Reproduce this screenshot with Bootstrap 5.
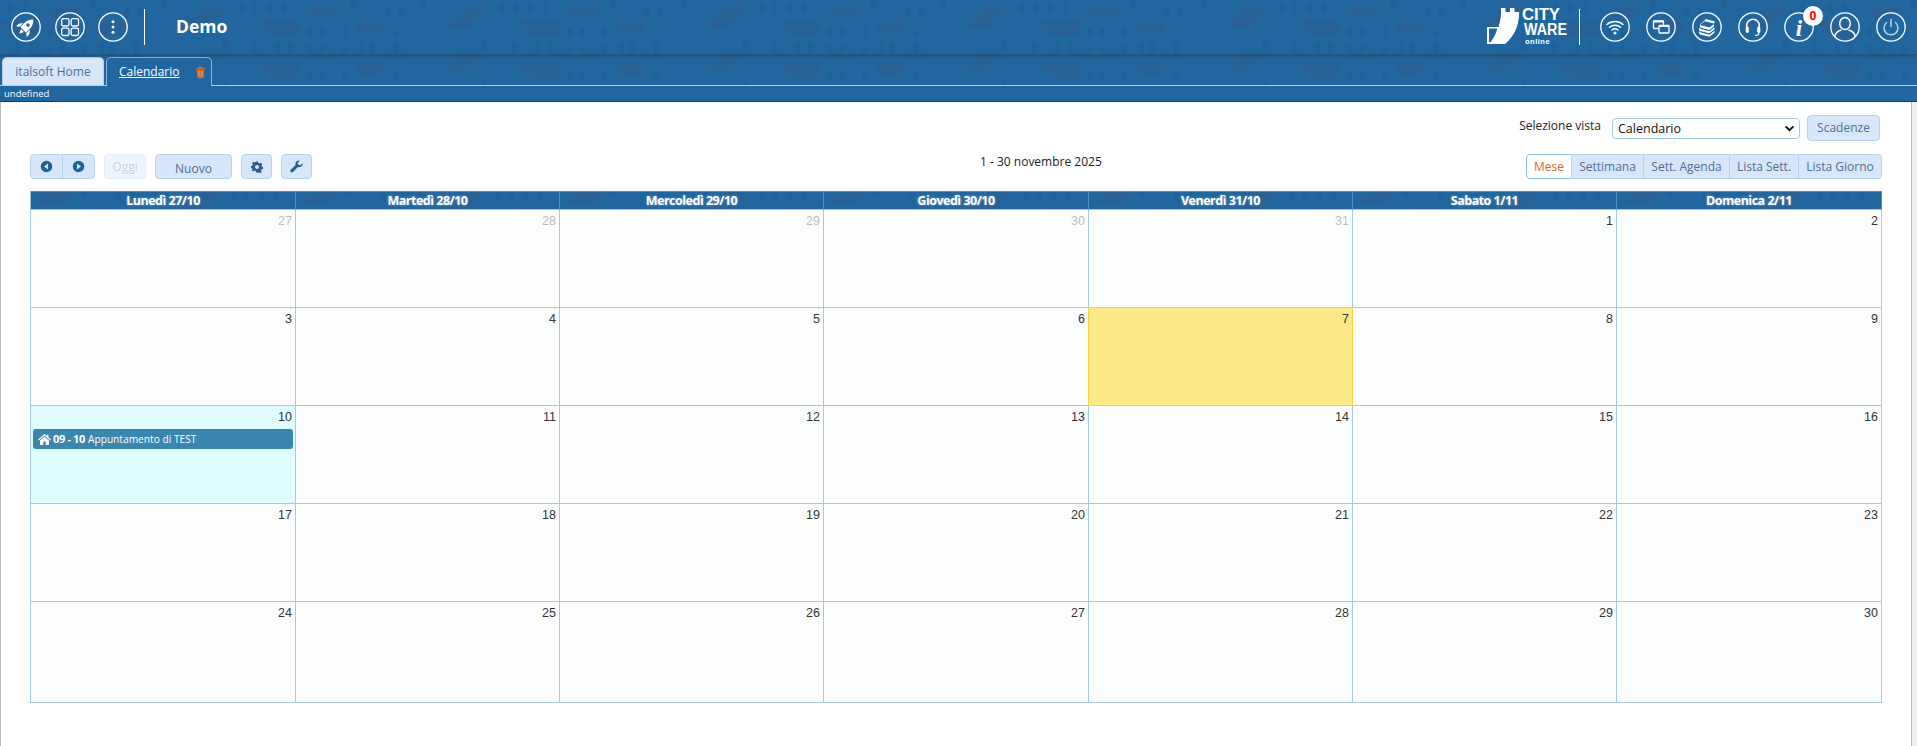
<!DOCTYPE html>
<html lang="it">
<head>
<meta charset="utf-8">
<title>Calendario</title>
<link href="https://cdn.jsdelivr.net/npm/bootstrap@5.3.0/dist/css/bootstrap.min.css" rel="stylesheet">
<style>
:root{--blu:#21669f;--tile:url("data:image/svg+xml,%3Csvg xmlns='http://www.w3.org/2000/svg' width='260' height='54'%3E%3Cg fill='%23276195'%3E%3Cpath d='M3 18 15 6h29L33 18zM57 22h31l-8 12H57zM143 28 166 6h24l-21 22zM216 21h44v15h-29z'/%3E%3C/g%3E%3Cg fill='%23216199'%3E%3Crect x='7' y='28' width='5' height='9' rx='2'/%3E%3Crect x='20' y='28' width='5' height='9' rx='2'/%3E%3Crect x='42' y='28' width='5' height='9' rx='2'/%3E%3Crect x='7' y='45' width='5' height='9' rx='2'/%3E%3Crect x='20' y='45' width='5' height='9' rx='2'/%3E%3Crect x='42' y='45' width='5' height='9' rx='2'/%3E%3Crect x='59' y='42' width='5' height='12' rx='2'/%3E%3Crect x='70' y='42' width='5' height='12' rx='2'/%3E%3Crect x='93' y='30' width='6' height='6' rx='3'/%3E%3Crect x='94' y='42' width='5' height='12' rx='2'/%3E%3Crect x='85' y='6' width='5' height='11' rx='2'/%3E%3Crect x='98' y='6' width='5' height='11' rx='2'/%3E%3Crect x='121' y='0' width='5' height='10' rx='2'/%3E%3Crect x='50' y='0' width='6' height='10' rx='2'/%3E%3Crect x='182' y='38' width='5' height='12' rx='2'/%3E%3Crect x='212' y='42' width='5' height='12' rx='2'/%3E%3Crect x='235' y='42' width='5' height='12' rx='2'/%3E%3Crect x='248' y='42' width='5' height='12' rx='2'/%3E%3Crect x='200' y='3' width='5' height='10' rx='2'/%3E%3Crect x='213' y='3' width='5' height='10' rx='2'/%3E%3Crect x='228' y='3' width='5' height='10' rx='2'/%3E%3Crect x='242' y='3' width='5' height='10' rx='2'/%3E%3C/g%3E%3C/svg%3E");}
html,body{height:100%;}
body{font-family:"Open Sans",sans-serif;font-size:13px;background:#fff;overflow:hidden;color:#222;}
.shell{height:746px;}
.topbar{height:55px;background:var(--blu) var(--tile) 40px 0 repeat-x;border-bottom:1px solid #24527c;padding:0 11px 0 11px;position:relative;z-index:2;box-shadow:0 1px 3px rgba(20,50,80,.45);}
.roundico{width:30px;height:30px;display:block;flex:none;}
.vsep{width:1px;height:36px;background:#fff;}
.appname{font-size:17.5px;font-weight:700;color:#fff;margin-left:31px;line-height:1;}
.lefticons{gap:13.5px;margin-right:16px;}
.righticons{gap:16px;margin-left:20px;}
.logo-box{width:86px;height:40px;flex:none;}
.logo-sep{margin-left:6px;}
.logo-txt{font-family:"Liberation Sans",sans-serif;font-weight:700;fill:#fff;}
.bellwrap{position:relative;}
.bell{position:absolute;top:-6px;right:-9px;width:20px;height:20px;border-radius:50%;background:#fff;color:#f00;font-size:12px;font-weight:700;display:flex;align-items:center;justify-content:center;line-height:1;}
.tabstrip{height:31px;background:var(--blu) var(--tile) 40px -13px repeat-x;border-bottom:1px solid #b6d0e8;padding:2px 0 0 2px;gap:2px;}
.tabstrip .tabitem{height:29px;border-radius:5px 5px 0 0;font-size:12px;display:flex;align-items:center;text-decoration:none;flex:none;white-space:nowrap;}
.tabitem.off{width:102px;justify-content:center;background:#d7e6fb;color:#4f6f96;border:1px solid #b6d0e8;border-bottom:0;height:28px;}
.tabitem.on{width:106px;height:30px;padding-left:12px;color:#fff;border:1px solid #8db8de;border-bottom:1px solid var(--blu);background:var(--blu);margin-bottom:-1px;justify-content:flex-start;}
.tabitem.on u{margin-right:15px;}
.tabitem.on svg{flex:none;}
.substrip{height:16px;background:var(--blu);border-bottom:1px solid #1c3b58;color:#fff;font-size:9.5px;line-height:15px;padding-left:4px;}
.mainwrap{min-height:0;}
.pagearea{border-left:1px solid #bbb;border-right:1px solid #bbb;padding:13px 29px 0 29px;min-width:0;}
.edge{width:5px;background:#eee;flex:none;}
.vistarow{height:26px;padding-right:2px;}
.vistalabel{font-size:12px;margin-right:11px;color:#222;position:relative;top:-2px;}
.vista-sel{width:188px;height:21px;font-size:12.5px;padding:0 20px 0 5px;border:1px solid #a3c9e6;border-radius:4px;color:#111;margin-right:7px;background-image:url("data:image/svg+xml,%3Csvg xmlns='http://www.w3.org/2000/svg' viewBox='0 0 12 8'%3E%3Cpath d='M1.500 1.500 6 6l4.500-4.500' fill='none' stroke='%23111' stroke-width='2.200'/%3E%3C/svg%3E");background-size:11px 7px;background-position:right 4px center;line-height:19px;}
.tb{background:#d7e6fb;border:1px solid #b9d3ee;color:#4f6f96;font-size:12px;line-height:1;padding:0;border-radius:4px;height:25px;display:inline-flex;align-items:center;justify-content:center;}
.tb:hover{background:#d7e6fb;color:#4f6f96;border-color:#b9d3ee;}
.scad{width:73px;height:26px;}
.tbrow{height:25px;margin-top:13px;margin-bottom:12px;}
.tbrow .tb.oggi,.tbrow .tb.oggi:disabled{background:#eef5fe;border-color:#e3eefb;color:#c4d3e5;opacity:1;width:42px;margin-left:9px;}
.nuovo{width:77px;margin-left:9px;padding-top:5px;}
.sq{width:31px;margin-left:9px;}
.nv{width:33px;}
.calrange{margin-left:668px;font-size:12px;color:#222;position:relative;top:-5px;}
.vw{height:25px;}
.vw.cur,.vw.cur:hover{background:#fff;color:#e0691d;border-color:#8fbce0;}
.w1{width:46px;}.w2{width:73px;}.w3{width:87px;}.w4{width:70px;}.w5{width:84px;}
.caltable{width:1852px;table-layout:fixed;border-collapse:separate;border-spacing:0;border-left:1px solid #a3c9e6;border-top:1px solid #4b8dc4;margin:0;}
.caltable th{width:264px;height:17px;padding:0;font-size:12.5px;letter-spacing:-.5px;line-height:17px;font-weight:700;text-align:center;color:#fff;background:var(--blu) var(--tile) 0 -6px;border-right:1px solid #4b8dc4;border-bottom:1px solid #a3c9e6;text-shadow:0 0 3px rgba(255,255,255,.4);}
.caltable th:nth-child(1),.caltable th:nth-child(4),.caltable th:nth-child(7){width:265px;}
.caltable td{height:98px;padding:4px 3px 0 1px;vertical-align:top;background:#fcfefd;border-right:1px solid #a3c9e6;border-bottom:1px solid #a3c9e6;}
.caltable tr.lastrow td{height:101px;border-bottom-color:#a9c6da;}
.dnum{font-family:"Liberation Sans",sans-serif;font-size:12.5px;line-height:15px;text-align:right;color:#333;}
td.prev .dnum{color:#bcbcbc;}
.caltable td.oggicell{background:#fbea87;border-right-color:#fad33c;border-bottom-color:#fad33c;box-shadow:-1px 0 0 #fad33c,0 -1px 0 #fad33c;}
.caltable td.selcell{background:#dffcff;}
.evt{margin:4px 0 0 1px;height:20px;width:260px;background:#3a86ae;color:#fff;border-radius:3px;font-size:10.2px;line-height:20px;padding-left:5px;display:flex;align-items:center;gap:2px;white-space:nowrap;}
.evt b{font-size:11px;letter-spacing:-.35px;font-weight:700;margin-right:1px;}
</style>
</head>
<body>
<div class="shell d-flex flex-column">
  <header class="topbar d-flex align-items-center flex-none">
    <div class="d-flex align-items-center lefticons">
      <svg class="roundico" viewBox="0 0 30 30"><circle cx="15" cy="15" r="14.2" fill="none" stroke="#fff" stroke-width="1.3"/><g transform="rotate(45 15 15)" fill="#fff"><path fill-rule="evenodd" d="M15 4.500C18 7.500 19 10.500 19 13.500V19H11V13.500C11 10.500 12 7.500 15 4.500ZM15 10.500a1.700 1.700 0 1 0 0 3.400 1.700 1.700 0 0 0 0-3.400Z"/><path d="M10.300 14 7.500 18v3.500l2.800-2zM19.700 14l2.800 4v3.500l-2.800-2zM13 20h4l-2 4.500z"/></g></svg>
      <svg class="roundico" viewBox="0 0 30 30"><circle cx="15" cy="15" r="14.2" fill="none" stroke="#fff" stroke-width="1.3"/><g fill="none" stroke="#fff" stroke-width="1.300"><rect x="6.700" y="6.700" width="7.300" height="7.300" rx="1.500"/><rect x="16.200" y="6.700" width="7.300" height="7.300" rx="1.500"/><rect x="6.700" y="16.200" width="7.300" height="7.300" rx="1.500"/><rect x="16.200" y="16.200" width="7.300" height="7.300" rx="1.500"/></g></svg>
      <svg class="roundico" viewBox="0 0 30 30"><circle cx="15" cy="15" r="14.2" fill="none" stroke="#fff" stroke-width="1.3"/><g fill="#fff"><circle cx="15" cy="9.800" r="1.500"/><circle cx="15" cy="15" r="1.500"/><circle cx="15" cy="20.200" r="1.500"/></g></svg>
    </div>
    <div class="vsep"></div>
    <div class="appname">Demo</div>
    <div class="ms-auto logo-box">
      <svg width="86" height="40" viewBox="0 0 86 40"><path d="M14 1h4.500v4H23V1h4.500v4H32V1c1 14-3 27-14 36H0V20h11.500c2-6 3-13 2.500-19z" fill="#fff"/><path d="M2 21.500h8.300c-1 4.500-3.500 9.500-6.500 13.500H2z" fill="#21669f"/><text class="logo-txt" x="35" y="13" font-size="16" textLength="38" lengthAdjust="spacingAndGlyphs">CITY</text><text class="logo-txt" x="37" y="28" font-size="16" textLength="43" lengthAdjust="spacingAndGlyphs">WARE</text><text class="logo-txt" x="38" y="37" font-size="7.500" letter-spacing=".5">online</text></svg>
    </div>
    <div class="vsep logo-sep"></div>
    <div class="d-flex align-items-center righticons">
      <svg class="roundico" viewBox="0 0 30 30"><circle cx="15" cy="15" r="14.2" fill="none" stroke="#fff" stroke-width="1.3"/><g fill="none" stroke="#fff" stroke-width="1.400" stroke-linecap="round"><path d="M7 12.500c4.600-4 11.400-4 16 0"/><path d="M9.500 15.200c3.200-2.700 7.800-2.700 11 0"/><path d="M12 18c1.800-1.400 4.200-1.400 6 0"/></g><circle cx="15" cy="21" r="1.500" fill="#fff"/></svg>
      <svg class="roundico" viewBox="0 0 30 30"><circle cx="15" cy="15" r="14.2" fill="none" stroke="#fff" stroke-width="1.3"/><g fill="none" stroke="#fff" stroke-width="1.300"><rect x="7.500" y="9" width="10" height="7.500" rx=".8"/><rect x="13" y="13.500" width="10" height="7.500" rx=".8" fill="#21669f"/></g><rect x="7.500" y="8.500" width="10" height="2" fill="#fff"/><rect x="13" y="13" width="10" height="2" fill="#fff"/></svg>
      <svg class="roundico" viewBox="0 0 30 30"><circle cx="15" cy="15" r="14.2" fill="none" stroke="#fff" stroke-width="1.3"/><path d="M14 7l9 2.500-1 2-9.500-2.300L8 13l9.500 2.500L22 12v2.500l-4.500 3.500L8 15.500v-3z" fill="#fff"/><path d="M7 15.500l1 1.200 9.500 2.600 5-4v2l-5 4L8 19l-1-1.300zM7 19l1 1.200 9.500 2.600 5-4v2l-5 4L8 22.500l-1-1.300z" fill="#fff"/></svg>
      <svg class="roundico" viewBox="0 0 30 30"><circle cx="15" cy="15" r="14.2" fill="none" stroke="#fff" stroke-width="1.3"/><path d="M8.700 16v-2.500a6.300 6.300 0 0 1 12.600 0V16" fill="none" stroke="#fff" stroke-width="1.500"/><rect x="7.700" y="14.500" width="3.100" height="6.500" rx="1.400" fill="#fff"/><rect x="19.200" y="14.500" width="3.100" height="6.500" rx="1.400" fill="#fff"/><path d="M21 20.500c0 2-1.500 3-4 3" fill="none" stroke="#fff" stroke-width="1.200"/></svg>
      <span class="bellwrap">
        <svg class="roundico" viewBox="0 0 30 30"><circle cx="15" cy="15" r="14.2" fill="none" stroke="#fff" stroke-width="1.3"/><text x="15" y="24" text-anchor="middle" font-family="Liberation Serif,serif" font-style="italic" font-weight="700" font-size="23" fill="#fff">i</text></svg>
        <span class="bell">0</span>
      </span>
      <svg class="roundico" viewBox="0 0 30 30"><circle cx="15" cy="15" r="14.2" fill="none" stroke="#fff" stroke-width="1.3"/><ellipse cx="15" cy="11.500" rx="5.300" ry="6" fill="none" stroke="#fff" stroke-width="1.500"/><path d="M4.500 25c1-4.500 4.500-6.500 7-7M25.500 25c-1-4.500-4.500-6.500-7-7" fill="none" stroke="#fff" stroke-width="1.500"/></svg>
      <svg class="roundico" viewBox="0 0 30 30"><circle cx="15" cy="15" r="14.2" fill="none" stroke="#fff" stroke-width="1.3"/><g fill="none" stroke="#b9d3ea" stroke-width="1.500" stroke-linecap="round"><path d="M15 7.500v7"/><path d="M10.500 10.500a7 7 0 1 0 9 0"/></g></svg>
    </div>
  </header>
  <nav class="tabstrip d-flex align-items-start">
    <a class="tabitem off" href="#">italsoft Home</a>
    <a class="tabitem on" href="#"><u>Calendario</u><svg width="11" height="12" viewBox="0 0 11 12"><path d="M1 2.200h9v1.300H1zM3.500 1h4v1.200h-4zM1.800 4h7.400L8.500 12h-6z" fill="#e0691d"/><path d="M4 5v5.500M7 5v5.500" stroke="#f4b080" stroke-width=".7"/></svg></a>
  </nav>
  <div class="substrip">undefined</div>
  <div class="mainwrap d-flex flex-grow-1">
    <main class="pagearea flex-grow-1">
      <div class="vistarow d-flex align-items-center justify-content-end">
        <span class="vistalabel">Selezione vista</span>
        <select class="form-select vista-sel"><option>Calendario</option></select>
        <button class="btn tb scad" type="button">Scadenze</button>
      </div>
      <div class="tbrow d-flex align-items-center">
        <div class="btn-group">
          <button class="btn tb nv" type="button"><svg width="13" height="13" viewBox="0 0 13 13"><circle cx="6.500" cy="6.500" r="5.800" fill="#22639b"/><path d="M8 3.500v6L4 6.500z" fill="#d7e6fb"/></svg></button>
          <button class="btn tb nv" type="button"><svg width="13" height="13" viewBox="0 0 13 13"><circle cx="6.500" cy="6.500" r="5.800" fill="#22639b"/><path d="M5 3.500v6l4-3z" fill="#d7e6fb"/></svg></button>
        </div>
        <button class="btn tb oggi" type="button" disabled>Oggi</button>
        <button class="btn tb nuovo" type="button">Nuovo</button>
        <button class="btn tb sq" type="button"><svg width="12" height="12" viewBox="0 0 12 12"><path d="M5 .5h2l.3 1.500 1.200.5L9.800 1.700l1.400 1.400-.8 1.300.5 1.200 1.100.4v2l-1.500.3-.5 1.200.8 1.300-1.400 1.400-1.300-.8-1.200.5L7 11.500H5l-.3-1.500-1.200-.5-1.300.8L.8 9.900l.8-1.300-.5-1.200L-.1 7V5l1.500-.3.5-1.200-.8-1.300L2 .8l1.300.8 1.200-.5z" fill="#2c5f8e"/><circle cx="6" cy="6" r="2" fill="#d7e6fb"/></svg></button>
        <button class="btn tb sq" type="button"><svg width="13" height="13" viewBox="0 0 13 13"><path d="M12.500 3.200 10.300 5.300 8.300 4.800 7.800 2.800 9.900.6C8.100 0 6.200.9 5.600 2.600c-.3.800-.2 1.600 0 2.300L.7 9.700c-.6.600-.6 1.600 0 2.300s1.600.6 2.300 0l4.900-4.900c2.100.6 4.200-.4 4.700-2.300.2-.6.100-1.200-.1-1.600z" fill="#2c5f8e"/></svg></button>
        <span class="calrange">1 - 30 novembre 2025</span>
        <div class="btn-group ms-auto">
          <button class="btn tb vw cur w1" type="button">Mese</button>
          <button class="btn tb vw w2" type="button">Settimana</button>
          <button class="btn tb vw w3" type="button">Sett. Agenda</button>
          <button class="btn tb vw w4" type="button">Lista Sett.</button>
          <button class="btn tb vw w5" type="button">Lista Giorno</button>
        </div>
      </div>
      <table class="table caltable">
        <thead><tr><th>Lunedì 27/10</th><th>Martedì 28/10</th><th>Mercoledì 29/10</th><th>Giovedì 30/10</th><th>Venerdì 31/10</th><th>Sabato 1/11</th><th>Domenica 2/11</th></tr></thead>
        <tbody>
          <tr><td class="prev"><div class="dnum">27</div></td><td class="prev"><div class="dnum">28</div></td><td class="prev"><div class="dnum">29</div></td><td class="prev"><div class="dnum">30</div></td><td class="prev"><div class="dnum">31</div></td><td><div class="dnum">1</div></td><td><div class="dnum">2</div></td></tr>
          <tr><td><div class="dnum">3</div></td><td><div class="dnum">4</div></td><td><div class="dnum">5</div></td><td><div class="dnum">6</div></td><td class="oggicell"><div class="dnum">7</div></td><td><div class="dnum">8</div></td><td><div class="dnum">9</div></td></tr>
          <tr><td class="selcell"><div class="dnum">10</div><div class="evt"><svg width="13" height="11" viewBox="0 0 13 11"><path d="M6.500 0 0 5.600l.8.800L6.500 1.600l5.700 4.800.8-.8L10.500 3.400V.8H9v1.300zM2 6.500V11h3.300V7.600h2.400V11H11V6.500L6.500 2.700z" fill="#fff"/></svg><b>09 - 10</b>Appuntamento di TEST</div></td><td><div class="dnum">11</div></td><td><div class="dnum">12</div></td><td><div class="dnum">13</div></td><td><div class="dnum">14</div></td><td><div class="dnum">15</div></td><td><div class="dnum">16</div></td></tr>
          <tr><td><div class="dnum">17</div></td><td><div class="dnum">18</div></td><td><div class="dnum">19</div></td><td><div class="dnum">20</div></td><td><div class="dnum">21</div></td><td><div class="dnum">22</div></td><td><div class="dnum">23</div></td></tr>
          <tr class="lastrow"><td><div class="dnum">24</div></td><td><div class="dnum">25</div></td><td><div class="dnum">26</div></td><td><div class="dnum">27</div></td><td><div class="dnum">28</div></td><td><div class="dnum">29</div></td><td><div class="dnum">30</div></td></tr>
        </tbody>
      </table>
    </main>
    <div class="edge"></div>
  </div>
</div>
</body>
</html>
